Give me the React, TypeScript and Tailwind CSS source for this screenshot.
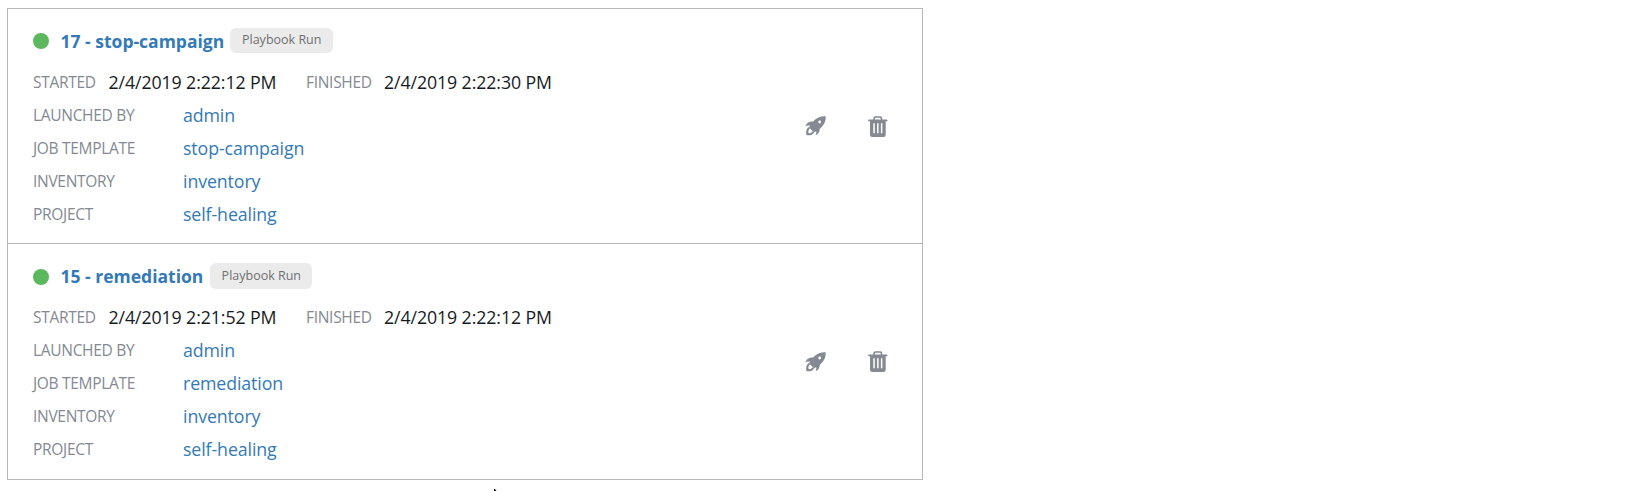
type Job = {
  id: number;
  name: string;
  started: string;
  finished: string;
  height: string;
  dot: string;
  badge: string;
  rocket: string;
};

const jobs: Job[] = [
  {
    id: 17,
    name: 'stop-campaign',
    started: '2/4/2019 2:22:12 PM',
    finished: '2/4/2019 2:22:30 PM',
    height: 'h-[235px]',
    dot: 'mt-[5px]',
    badge: 'ml-[6px] w-[103px] h-[25px]',
    rocket: '',
  },
  {
    id: 15,
    name: 'remediation',
    started: '2/4/2019 2:21:52 PM',
    finished: '2/4/2019 2:22:12 PM',
    height: 'h-[236px]',
    dot: 'mt-[6px]',
    badge: 'ml-[7px] w-[102px] h-[26px]',
    rocket: 'mt-px',
  },
];

function Rocket() {
  return (
    <svg width="21" height="20" viewBox="0 0 21 20" fill="#848992">
      <path
        fillRule="evenodd"
        d="M20.7 0.2C16 0 12.4 1.2 9.6 4L8.2 5.5C6 5.2 3.8 6 2.4 7L0.2 10.3C2 9.4 3.8 9.3 4.9 9.6L4.1 11.5L8.9 16.2L11.1 15.3C11.6 16.6 11.3 18 10.4 19.6C13.3 18 14.9 15.8 14.8 12.8L16.2 11.4C19.4 8.5 20.9 4.6 20.7 0.2ZM14.7 4.6A1.4 1.4 0 1 1 14.7 7.4A1.4 1.4 0 1 1 14.7 4.6Z"
      />
      <path d="M3.7 11.1C1.3 12.8 0.7 15.6 1.4 19.1C4.8 19.8 7.7 18.8 9.1 16.4L7.7 15.2C6.6 16.8 5.2 17.5 3.5 17.1C3 15.2 3.5 13.7 5 12.5Z" />
    </svg>
  );
}

function Trash() {
  return (
    <svg width="20" height="21" viewBox="0 0 20 21" fill="#848992">
      <path d="M5.3 4V2.2Q5.3 0.2 7.3 0.2H12.3Q14.3 0.2 14.3 2.2V4H12.7V2.5Q12.7 1.7 11.9 1.7H7.7Q6.9 1.7 6.9 2.5V4Z" />
      <path d="M1 3.5H18.6Q19.4 3.5 19.4 4.3V5.2H0.3V4.3Q0.3 3.5 1 3.5Z" />
      <path
        fillRule="evenodd"
        d="M2 5H17.7V18.5Q17.7 21 15.2 21H4.5Q2 21 2 18.5ZM5.3 7.2V17.2H6.8V7.2ZM9.1 7.2V17.2H10.6V7.2ZM12.9 7.2V17.2H14.4V7.2Z"
      />
    </svg>
  );
}

function Field({ label, value }: { label: string; value: string }) {
  return (
    <div className="flex h-[33px] items-center">
      <span className="w-[150px] text-[15.5px] tracking-[-0.3px] text-[#848992]">{label}</span>
      <a className="text-[17.75px] tracking-[-0.1px] text-[#337ab7]">{value}</a>
    </div>
  );
}

function JobRow({ job }: { job: Job }) {
  return (
    <section className={`flex border-b border-[#b7b7b7] pl-[25px] ${job.height}`}>
      <div className="w-[772px] pt-[19px]">
        <div className="flex h-[26px] items-start">
          <i className={`mr-[11.5px] h-[15.5px] w-4 rounded-full bg-[#5cb85c] ${job.dot}`} />
          <a className="text-[17.5px] leading-[26px] font-bold text-[#337ab7]">{job.id} - {job.name}</a>
          <span className={`flex items-center justify-center rounded-[6px] bg-[#ebebeb] text-[12.5px] text-[#707070] ${job.badge}`}>
            Playbook Run
          </span>
        </div>
        <div className="mt-[12px] flex h-[33px] items-center">
          <span className="w-[75.5px] text-[15.5px] tracking-[-0.3px] text-[#848992]">STARTED</span>
          <span className="w-[197.5px] text-[17.75px] tracking-[-0.1px] text-[#161b1f]">{job.started}</span>
          <span className="w-[78px] text-[15.5px] tracking-[-0.3px] text-[#848992]">FINISHED</span>
          <span className="text-[17.75px] tracking-[-0.1px] text-[#161b1f]">{job.finished}</span>
        </div>
        <Field label="LAUNCHED BY" value="admin" />
        <Field label="JOB TEMPLATE" value={job.name} />
        <Field label="INVENTORY" value="inventory" />
        <Field label="PROJECT" value="self-healing" />
      </div>
      <div className="flex items-start pt-[107px]">
        <button aria-label="Launch" className={`h-5 w-[21px] ${job.rocket}`}><Rocket /></button>
        <button aria-label="Delete" className="ml-[42px] h-[21px] w-5"><Trash /></button>
      </div>
    </section>
  );
}

export default function App() {
  return (
    <main className="h-[491px] overflow-hidden bg-white pl-[7px] pt-2 font-['Open_Sans',sans-serif] whitespace-nowrap">
      <div className="w-[916px] border-x border-t border-[#b7b7b7]">
        {jobs.map((job) => <JobRow key={job.id} job={job} />)}
      </div>
      <svg className="ml-[487px] mt-[9px]" width="4" height="2" viewBox="0 0 4 2">
        <path d="M0 0H1L2.5 2H0Z" fill="#111122" />
      </svg>
    </main>
  );
}
